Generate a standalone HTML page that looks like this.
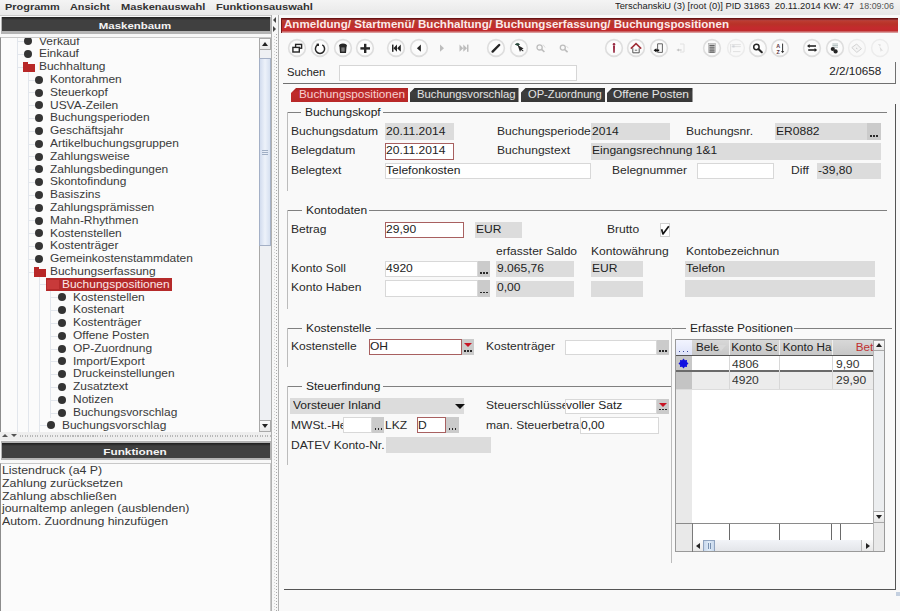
<!DOCTYPE html><html><head><meta charset="utf-8"><style>
html,body{margin:0;padding:0;width:900px;height:611px;overflow:hidden;background:#f0f0f0;font-family:"Liberation Sans",sans-serif;position:relative}
</style></head><body>
<div style="position:absolute;left:0px;top:0px;width:900px;height:16px;background:linear-gradient(#f4f4f4,#e8e8e8);border-bottom:1px solid #cacaca;box-sizing:border-box"></div>
<div style="position:absolute;left:4.9px;top:1.69px;font-size:9.70px;line-height:9.70px;white-space:nowrap;color:#333;font-weight:bold;transform:scaleX(1.1275);transform-origin:left 0;">Programm</div>
<div style="position:absolute;left:70.2px;top:1.69px;font-size:9.70px;line-height:9.70px;white-space:nowrap;color:#333;font-weight:bold;transform:scaleX(1.1245);transform-origin:left 0;">Ansicht</div>
<div style="position:absolute;left:121px;top:1.69px;font-size:9.70px;line-height:9.70px;white-space:nowrap;color:#333;font-weight:bold;transform:scaleX(1.1427);transform-origin:left 0;">Maskenauswahl</div>
<div style="position:absolute;left:216.4px;top:1.69px;font-size:9.70px;line-height:9.70px;white-space:nowrap;color:#333;font-weight:bold;transform:scaleX(1.1463);transform-origin:left 0;">Funktionsauswahl</div>
<div style="position:absolute;left:614.5px;top:2.37px;font-size:8.90px;line-height:8.90px;white-space:nowrap;color:#222;transform:scaleX(1.0517);transform-origin:left 0;">TerschanskiU (3) [root (0)] PID 31863 &nbsp;20.11.2014 KW: 47</div>
<div style="position:absolute;left:859.3px;top:2.37px;font-size:8.90px;line-height:8.90px;white-space:nowrap;color:#555;">18:09:06</div>
<div style="position:absolute;left:0px;top:16px;width:271px;height:595px;background:#f8f8f8"></div>
<div style="position:absolute;left:1px;top:17px;width:270px;height:16.5px;background:#b4b4b4"></div>
<div style="position:absolute;left:2px;top:17.3px;width:268px;height:14px;background:linear-gradient(#1e1e1e,#2e2e2e 1.5px,#404040 3px,#404040)"></div>
<div style="position:absolute;left:-164.75px;width:600px;text-align:center;top:21.17px;font-size:9.60px;line-height:9.60px;white-space:nowrap;color:#f4f4f4;font-weight:bold;transform:scaleX(1.1920);transform-origin:center 0;">Maskenbaum</div>
<div style="position:absolute;left:0px;top:37px;width:271px;height:395px;background:#fbfbfb;border-left:1px solid #8c8c8c;border-top:1px solid #c8c8c8;box-sizing:border-box;overflow:hidden"></div>
<div style="position:absolute;left:0;top:38px;width:259px;height:394px;overflow:hidden">
<div style="position:absolute;left:16.5px;top:0px;width:1px;height:394px;background:#e2e6ec"></div>
<div style="position:absolute;left:27.5px;top:34px;width:1px;height:360px;background:#e2e6ec"></div>
<div style="position:absolute;left:38.5px;top:239px;width:1px;height:155px;background:#e2e6ec"></div>
<div style="position:absolute;left:49.5px;top:252px;width:1px;height:128px;background:#e2e6ec"></div>
<div style="position:absolute;left:16.5px;top:3px;width:7.5px;height:1px;background:#e2e6ec"></div>
<div style="position:absolute;left:24.00px;top:-0.70px;width:8px;height:8px;border-radius:50%;background:#343434"></div>
<div style="position:absolute;left:39.0px;top:-2.46px;font-size:10.82px;line-height:10.82px;white-space:nowrap;color:#3a3a3a;transform:scaleX(1.1050);transform-origin:left 0;">Verkauf</div>
<div style="position:absolute;left:16.5px;top:16px;width:7.5px;height:1px;background:#e2e6ec"></div>
<div style="position:absolute;left:24.00px;top:12.10px;width:8px;height:8px;border-radius:50%;background:#343434"></div>
<div style="position:absolute;left:39.0px;top:10.34px;font-size:10.82px;line-height:10.82px;white-space:nowrap;color:#3a3a3a;transform:scaleX(1.1050);transform-origin:left 0;">Einkauf</div>
<div style="position:absolute;left:16.5px;top:29px;width:7.5px;height:1px;background:#e2e6ec"></div>
<div style="position:absolute;left:23.00px;top:24.40px;width:12px;height:9px;"><div style="position:absolute;left:0;top:0;width:5px;height:2px;background:#b82828"></div><div style="position:absolute;left:0;top:1.5px;width:12px;height:8px;background:#b82828"></div></div>
<div style="position:absolute;left:39.0px;top:23.14px;font-size:10.82px;line-height:10.82px;white-space:nowrap;color:#3a3a3a;transform:scaleX(1.1050);transform-origin:left 0;">Buchhaltung</div>
<div style="position:absolute;left:27.85px;top:42px;width:7.5px;height:1px;background:#e2e6ec"></div>
<div style="position:absolute;left:35.35px;top:37.70px;width:8px;height:8px;border-radius:50%;background:#343434"></div>
<div style="position:absolute;left:50.35px;top:35.94px;font-size:10.82px;line-height:10.82px;white-space:nowrap;color:#3a3a3a;transform:scaleX(1.1050);transform-origin:left 0;">Kontorahmen</div>
<div style="position:absolute;left:27.85px;top:54px;width:7.5px;height:1px;background:#e2e6ec"></div>
<div style="position:absolute;left:35.35px;top:50.50px;width:8px;height:8px;border-radius:50%;background:#343434"></div>
<div style="position:absolute;left:50.35px;top:48.74px;font-size:10.82px;line-height:10.82px;white-space:nowrap;color:#3a3a3a;transform:scaleX(1.1050);transform-origin:left 0;">Steuerkopf</div>
<div style="position:absolute;left:27.85px;top:67px;width:7.5px;height:1px;background:#e2e6ec"></div>
<div style="position:absolute;left:35.35px;top:63.30px;width:8px;height:8px;border-radius:50%;background:#343434"></div>
<div style="position:absolute;left:50.35px;top:61.54px;font-size:10.82px;line-height:10.82px;white-space:nowrap;color:#3a3a3a;transform:scaleX(1.1050);transform-origin:left 0;">USVA-Zeilen</div>
<div style="position:absolute;left:27.85px;top:80px;width:7.5px;height:1px;background:#e2e6ec"></div>
<div style="position:absolute;left:35.35px;top:76.10px;width:8px;height:8px;border-radius:50%;background:#343434"></div>
<div style="position:absolute;left:50.35px;top:74.34px;font-size:10.82px;line-height:10.82px;white-space:nowrap;color:#3a3a3a;transform:scaleX(1.1050);transform-origin:left 0;">Buchungsperioden</div>
<div style="position:absolute;left:27.85px;top:93px;width:7.5px;height:1px;background:#e2e6ec"></div>
<div style="position:absolute;left:35.35px;top:88.90px;width:8px;height:8px;border-radius:50%;background:#343434"></div>
<div style="position:absolute;left:50.35px;top:87.14px;font-size:10.82px;line-height:10.82px;white-space:nowrap;color:#3a3a3a;transform:scaleX(1.1050);transform-origin:left 0;">Gesch&auml;ftsjahr</div>
<div style="position:absolute;left:27.85px;top:106px;width:7.5px;height:1px;background:#e2e6ec"></div>
<div style="position:absolute;left:35.35px;top:101.70px;width:8px;height:8px;border-radius:50%;background:#343434"></div>
<div style="position:absolute;left:50.35px;top:99.94px;font-size:10.82px;line-height:10.82px;white-space:nowrap;color:#3a3a3a;transform:scaleX(1.1050);transform-origin:left 0;">Artikelbuchungsgruppen</div>
<div style="position:absolute;left:27.85px;top:118px;width:7.5px;height:1px;background:#e2e6ec"></div>
<div style="position:absolute;left:35.35px;top:114.50px;width:8px;height:8px;border-radius:50%;background:#343434"></div>
<div style="position:absolute;left:50.35px;top:112.74px;font-size:10.82px;line-height:10.82px;white-space:nowrap;color:#3a3a3a;transform:scaleX(1.1050);transform-origin:left 0;">Zahlungsweise</div>
<div style="position:absolute;left:27.85px;top:131px;width:7.5px;height:1px;background:#e2e6ec"></div>
<div style="position:absolute;left:35.35px;top:127.30px;width:8px;height:8px;border-radius:50%;background:#343434"></div>
<div style="position:absolute;left:50.35px;top:125.54px;font-size:10.82px;line-height:10.82px;white-space:nowrap;color:#3a3a3a;transform:scaleX(1.1050);transform-origin:left 0;">Zahlungsbedingungen</div>
<div style="position:absolute;left:27.85px;top:144px;width:7.5px;height:1px;background:#e2e6ec"></div>
<div style="position:absolute;left:35.35px;top:140.10px;width:8px;height:8px;border-radius:50%;background:#343434"></div>
<div style="position:absolute;left:50.35px;top:138.34px;font-size:10.82px;line-height:10.82px;white-space:nowrap;color:#3a3a3a;transform:scaleX(1.1050);transform-origin:left 0;">Skontofindung</div>
<div style="position:absolute;left:27.85px;top:157px;width:7.5px;height:1px;background:#e2e6ec"></div>
<div style="position:absolute;left:35.35px;top:152.90px;width:8px;height:8px;border-radius:50%;background:#343434"></div>
<div style="position:absolute;left:50.35px;top:151.14px;font-size:10.82px;line-height:10.82px;white-space:nowrap;color:#3a3a3a;transform:scaleX(1.1050);transform-origin:left 0;">Basiszins</div>
<div style="position:absolute;left:27.85px;top:170px;width:7.5px;height:1px;background:#e2e6ec"></div>
<div style="position:absolute;left:35.35px;top:165.70px;width:8px;height:8px;border-radius:50%;background:#343434"></div>
<div style="position:absolute;left:50.35px;top:163.94px;font-size:10.82px;line-height:10.82px;white-space:nowrap;color:#3a3a3a;transform:scaleX(1.1050);transform-origin:left 0;">Zahlungspr&auml;missen</div>
<div style="position:absolute;left:27.85px;top:182px;width:7.5px;height:1px;background:#e2e6ec"></div>
<div style="position:absolute;left:35.35px;top:178.50px;width:8px;height:8px;border-radius:50%;background:#343434"></div>
<div style="position:absolute;left:50.35px;top:176.74px;font-size:10.82px;line-height:10.82px;white-space:nowrap;color:#3a3a3a;transform:scaleX(1.1050);transform-origin:left 0;">Mahn-Rhythmen</div>
<div style="position:absolute;left:27.85px;top:195px;width:7.5px;height:1px;background:#e2e6ec"></div>
<div style="position:absolute;left:35.35px;top:191.30px;width:8px;height:8px;border-radius:50%;background:#343434"></div>
<div style="position:absolute;left:50.35px;top:189.54px;font-size:10.82px;line-height:10.82px;white-space:nowrap;color:#3a3a3a;transform:scaleX(1.1050);transform-origin:left 0;">Kostenstellen</div>
<div style="position:absolute;left:27.85px;top:208px;width:7.5px;height:1px;background:#e2e6ec"></div>
<div style="position:absolute;left:35.35px;top:204.10px;width:8px;height:8px;border-radius:50%;background:#343434"></div>
<div style="position:absolute;left:50.35px;top:202.34px;font-size:10.82px;line-height:10.82px;white-space:nowrap;color:#3a3a3a;transform:scaleX(1.1050);transform-origin:left 0;">Kostentr&auml;ger</div>
<div style="position:absolute;left:27.85px;top:221px;width:7.5px;height:1px;background:#e2e6ec"></div>
<div style="position:absolute;left:35.35px;top:216.90px;width:8px;height:8px;border-radius:50%;background:#343434"></div>
<div style="position:absolute;left:50.35px;top:215.14px;font-size:10.82px;line-height:10.82px;white-space:nowrap;color:#3a3a3a;transform:scaleX(1.1050);transform-origin:left 0;">Gemeinkostenstammdaten</div>
<div style="position:absolute;left:27.85px;top:234px;width:7.5px;height:1px;background:#e2e6ec"></div>
<div style="position:absolute;left:34.35px;top:229.20px;width:12px;height:9px;"><div style="position:absolute;left:0;top:0;width:5px;height:2px;background:#b82828"></div><div style="position:absolute;left:0;top:1.5px;width:12px;height:8px;background:#b82828"></div></div>
<div style="position:absolute;left:50.35px;top:227.94px;font-size:10.82px;line-height:10.82px;white-space:nowrap;color:#3a3a3a;transform:scaleX(1.1050);transform-origin:left 0;">Buchungserfassung</div>
<div style="position:absolute;left:39.2px;top:246px;width:7.5px;height:1px;background:#e2e6ec"></div>
<div style="position:absolute;left:46.2px;top:240.3px;width:126px;height:12.3px;background:#b52a2a"></div>
<div style="position:absolute;left:46.70px;top:242.00px;width:12px;height:9px;background:#c83a3a"></div>
<div style="position:absolute;left:61.7px;top:240.74px;font-size:10.82px;line-height:10.82px;white-space:nowrap;color:#fbe6e6;transform:scaleX(1.1050);transform-origin:left 0;">Buchungspositionen</div>
<div style="position:absolute;left:50.55px;top:259px;width:7.5px;height:1px;background:#e2e6ec"></div>
<div style="position:absolute;left:58.05px;top:255.30px;width:8px;height:8px;border-radius:50%;background:#343434"></div>
<div style="position:absolute;left:73.05px;top:253.54px;font-size:10.82px;line-height:10.82px;white-space:nowrap;color:#3a3a3a;transform:scaleX(1.1050);transform-origin:left 0;">Kostenstellen</div>
<div style="position:absolute;left:50.55px;top:272px;width:7.5px;height:1px;background:#e2e6ec"></div>
<div style="position:absolute;left:58.05px;top:268.10px;width:8px;height:8px;border-radius:50%;background:#343434"></div>
<div style="position:absolute;left:73.05px;top:266.34px;font-size:10.82px;line-height:10.82px;white-space:nowrap;color:#3a3a3a;transform:scaleX(1.1050);transform-origin:left 0;">Kostenart</div>
<div style="position:absolute;left:50.55px;top:285px;width:7.5px;height:1px;background:#e2e6ec"></div>
<div style="position:absolute;left:58.05px;top:280.90px;width:8px;height:8px;border-radius:50%;background:#343434"></div>
<div style="position:absolute;left:73.05px;top:279.14px;font-size:10.82px;line-height:10.82px;white-space:nowrap;color:#3a3a3a;transform:scaleX(1.1050);transform-origin:left 0;">Kostentr&auml;ger</div>
<div style="position:absolute;left:50.55px;top:298px;width:7.5px;height:1px;background:#e2e6ec"></div>
<div style="position:absolute;left:58.05px;top:293.70px;width:8px;height:8px;border-radius:50%;background:#343434"></div>
<div style="position:absolute;left:73.05px;top:291.94px;font-size:10.82px;line-height:10.82px;white-space:nowrap;color:#3a3a3a;transform:scaleX(1.1050);transform-origin:left 0;">Offene Posten</div>
<div style="position:absolute;left:50.55px;top:311px;width:7.5px;height:1px;background:#e2e6ec"></div>
<div style="position:absolute;left:58.05px;top:306.50px;width:8px;height:8px;border-radius:50%;background:#343434"></div>
<div style="position:absolute;left:73.05px;top:304.74px;font-size:10.82px;line-height:10.82px;white-space:nowrap;color:#3a3a3a;transform:scaleX(1.1050);transform-origin:left 0;">OP-Zuordnung</div>
<div style="position:absolute;left:50.55px;top:323px;width:7.5px;height:1px;background:#e2e6ec"></div>
<div style="position:absolute;left:58.05px;top:319.30px;width:8px;height:8px;border-radius:50%;background:#343434"></div>
<div style="position:absolute;left:73.05px;top:317.54px;font-size:10.82px;line-height:10.82px;white-space:nowrap;color:#3a3a3a;transform:scaleX(1.1050);transform-origin:left 0;">Import/Export</div>
<div style="position:absolute;left:50.55px;top:336px;width:7.5px;height:1px;background:#e2e6ec"></div>
<div style="position:absolute;left:58.05px;top:332.10px;width:8px;height:8px;border-radius:50%;background:#343434"></div>
<div style="position:absolute;left:73.05px;top:330.34px;font-size:10.82px;line-height:10.82px;white-space:nowrap;color:#3a3a3a;transform:scaleX(1.1050);transform-origin:left 0;">Druckeinstellungen</div>
<div style="position:absolute;left:50.55px;top:349px;width:7.5px;height:1px;background:#e2e6ec"></div>
<div style="position:absolute;left:58.05px;top:344.90px;width:8px;height:8px;border-radius:50%;background:#343434"></div>
<div style="position:absolute;left:73.05px;top:343.14px;font-size:10.82px;line-height:10.82px;white-space:nowrap;color:#3a3a3a;transform:scaleX(1.1050);transform-origin:left 0;">Zusatztext</div>
<div style="position:absolute;left:50.55px;top:362px;width:7.5px;height:1px;background:#e2e6ec"></div>
<div style="position:absolute;left:58.05px;top:357.70px;width:8px;height:8px;border-radius:50%;background:#343434"></div>
<div style="position:absolute;left:73.05px;top:355.94px;font-size:10.82px;line-height:10.82px;white-space:nowrap;color:#3a3a3a;transform:scaleX(1.1050);transform-origin:left 0;">Notizen</div>
<div style="position:absolute;left:50.55px;top:375px;width:7.5px;height:1px;background:#e2e6ec"></div>
<div style="position:absolute;left:58.05px;top:370.50px;width:8px;height:8px;border-radius:50%;background:#343434"></div>
<div style="position:absolute;left:73.05px;top:368.74px;font-size:10.82px;line-height:10.82px;white-space:nowrap;color:#3a3a3a;transform:scaleX(1.1050);transform-origin:left 0;">Buchungsvorschlag</div>
<div style="position:absolute;left:39.2px;top:387px;width:7.5px;height:1px;background:#e2e6ec"></div>
<div style="position:absolute;left:46.70px;top:383.30px;width:8px;height:8px;border-radius:50%;background:#343434"></div>
<div style="position:absolute;left:61.7px;top:381.54px;font-size:10.82px;line-height:10.82px;white-space:nowrap;color:#3a3a3a;transform:scaleX(1.1050);transform-origin:left 0;">Buchungsvorschlag</div>
</div>
<div style="position:absolute;left:259px;top:38px;width:12px;height:394px;background:#eef0f3;border-left:1px solid #a8a8a8;box-sizing:border-box"></div>
<div style="position:absolute;left:259px;top:38px;width:12px;height:12px;background:linear-gradient(#fafafa,#e8e8e8);border:1px solid #a8a8a8;box-sizing:border-box"></div>
<div style="position:absolute;left:261.5px;top:42px;width:0px;height:0px;border-left:3.5px solid transparent;border-right:3.5px solid transparent;border-bottom:4px solid #222"></div>
<div style="position:absolute;left:259px;top:58px;width:12px;height:188px;background:linear-gradient(90deg,#d2dcee,#edf2fa 50%,#d6e0f0);border:1px solid #a4b0c6;box-sizing:border-box"></div>
<div style="position:absolute;left:262px;top:149.5px;width:6px;height:1px;background:#a0aec4"></div>
<div style="position:absolute;left:262px;top:151.5px;width:6px;height:1px;background:#a0aec4"></div>
<div style="position:absolute;left:262px;top:153.5px;width:6px;height:1px;background:#a0aec4"></div>
<div style="position:absolute;left:259px;top:420px;width:12px;height:12px;background:linear-gradient(#fafafa,#e8e8e8);border:1px solid #a8a8a8;box-sizing:border-box"></div>
<div style="position:absolute;left:261.5px;top:424px;width:0px;height:0px;border-left:3.5px solid transparent;border-right:3.5px solid transparent;border-top:4px solid #222"></div>
<div style="position:absolute;left:0px;top:432px;width:271px;height:8px;background:#eeeeee"></div>
<div style="position:absolute;left:20px;top:435px;width:251px;height:2px;background:repeating-linear-gradient(90deg,#b8b8b8 0 1px,transparent 1px 2.5px)"></div>
<div style="position:absolute;left:2px;top:434px;width:0px;height:0px;border-left:3px solid transparent;border-right:3px solid transparent;border-bottom:3.5px solid #555"></div>
<div style="position:absolute;left:11px;top:434px;width:0px;height:0px;border-left:3px solid transparent;border-right:3px solid transparent;border-top:3.5px solid #555"></div>
<div style="position:absolute;left:1px;top:441px;width:270px;height:19px;background:#b4b4b4"></div>
<div style="position:absolute;left:2px;top:443px;width:268px;height:14.7px;background:linear-gradient(#1e1e1e,#2e2e2e 1.5px,#404040 3px,#404040)"></div>
<div style="position:absolute;left:-164.6px;width:600px;text-align:center;top:447.07px;font-size:9.60px;line-height:9.60px;white-space:nowrap;color:#f4f4f4;font-weight:bold;transform:scaleX(1.2276);transform-origin:center 0;">Funktionen</div>
<div style="position:absolute;left:0px;top:463px;width:271px;height:148px;background:#fbfbfb;border-left:1px solid #8c8c8c;border-top:1px solid #c8c8c8;border-right:1px solid #c8c8c8;box-sizing:border-box"></div>
<div style="position:absolute;left:2px;top:465.06px;font-size:10.56px;line-height:10.56px;white-space:nowrap;color:#383838;transform:scaleX(1.1705);transform-origin:left 0;">Listendruck (a4 P)</div>
<div style="position:absolute;left:2px;top:477.81px;font-size:10.56px;line-height:10.56px;white-space:nowrap;color:#383838;transform:scaleX(1.1705);transform-origin:left 0;">Zahlung zur&uuml;cksetzen</div>
<div style="position:absolute;left:2px;top:490.56px;font-size:10.56px;line-height:10.56px;white-space:nowrap;color:#383838;transform:scaleX(1.1705);transform-origin:left 0;">Zahlung abschlie&szlig;en</div>
<div style="position:absolute;left:2px;top:503.31px;font-size:10.56px;line-height:10.56px;white-space:nowrap;color:#383838;transform:scaleX(1.1705);transform-origin:left 0;">journaltemp anlegen (ausblenden)</div>
<div style="position:absolute;left:2px;top:516.06px;font-size:10.56px;line-height:10.56px;white-space:nowrap;color:#383838;transform:scaleX(1.1705);transform-origin:left 0;">Autom. Zuordnung hinzuf&uuml;gen</div>
<div style="position:absolute;left:271px;top:15px;width:7px;height:596px;background:#eeeeee;border-left:1px solid #c4c4c4;box-sizing:border-box"></div>
<div style="position:absolute;left:271px;top:15px;width:7px;height:596px;background:#f7f7f7;border-left:1px solid #b0b0b0;box-sizing:border-box"></div>
<div style="position:absolute;left:276px;top:34px;width:1.2px;height:577px;background:repeating-linear-gradient(#a8a8a8 0 1.2px,transparent 1.2px 3px)"></div>
<div style="position:absolute;left:273.5px;top:35.5px;width:1px;height:577px;background:repeating-linear-gradient(#d4d4d4 0 1px,transparent 1px 3px)"></div>
<div style="position:absolute;left:273px;top:17px;width:0px;height:0px;border-top:3px solid transparent;border-bottom:3px solid transparent;border-right:3.5px solid #444"></div>
<div style="position:absolute;left:273px;top:25.5px;width:0px;height:0px;border-top:3px solid transparent;border-bottom:3px solid transparent;border-left:3.5px solid #444"></div>
<div style="position:absolute;left:278px;top:15px;width:622px;height:596px;background:#f9f9f9"></div>
<div style="position:absolute;left:278px;top:15px;width:1px;height:596px;background:#b0b0b0"></div>
<div style="position:absolute;left:895px;top:104px;width:1px;height:485.5px;background:#555"></div>
<div style="position:absolute;left:284px;top:588.6px;width:612px;height:1px;background:#555"></div>
<div style="position:absolute;left:896px;top:592px;width:4px;height:3.5px;background:#c4d0e0"></div>
<div style="position:absolute;left:281px;top:17.8px;width:617px;height:15.2px;background:linear-gradient(#6a1414 0,#6a1414 1.2px,#b04040 1.8px,#bc3a30 3.5px,#b83228 6px,#c42a2e 10px,#c02a2c 13.2px,#d89a9a 13.8px,#d89a9a 15.2px);border-left:1px solid #7a1a1a;box-sizing:border-box"></div>
<div style="position:absolute;left:283.9px;top:20.43px;font-size:10.00px;line-height:10.00px;white-space:nowrap;color:#fbeaea;font-weight:bold;transform:scaleX(1.1591);transform-origin:left 0;">Anmeldung/ Startmen&uuml;/ Buchhaltung/ Buchungserfassung/ Buchungspositionen</div>
<svg width="0" height="0" style="position:absolute"><defs><radialGradient id="rg" cx="50%" cy="45%" r="55%"><stop offset="0" stop-color="#ffffff"/><stop offset="0.85" stop-color="#fafafa"/><stop offset="1" stop-color="#eaeaea"/></radialGradient></defs></svg>
<svg style="position:absolute;left:286.70px;top:37.70px" width="20" height="20" viewBox="0 0 20 20"><circle cx="10" cy="10" r="8.4" fill="url(#rg)" stroke="#dedede" stroke-width="1.6"/><g transform="translate(1 1)"><rect x="7.6" y="5.4" width="6" height="3.8" fill="none" stroke="#262626" stroke-width="1.4"/><rect x="4.9" y="8.4" width="6.4" height="4.6" fill="#fafafa" stroke="#262626" stroke-width="1.4"/></g></svg>
<svg style="position:absolute;left:309.70px;top:37.70px" width="20" height="20" viewBox="0 0 20 20"><circle cx="10" cy="10" r="8.4" fill="url(#rg)" stroke="#dedede" stroke-width="1.6"/><g transform="translate(1 1)"><path d="M6.7 5.9 A4.6 4.6 0 1 0 11.3 5.9" fill="none" stroke="#262626" stroke-width="1.5"/><rect x="5.6" y="4.6" width="2.4" height="2.4" fill="#262626"/></g></svg>
<svg style="position:absolute;left:332.50px;top:37.70px" width="20" height="20" viewBox="0 0 20 20"><circle cx="10" cy="10" r="8.4" fill="url(#rg)" stroke="#dedede" stroke-width="1.6"/><g transform="translate(1 1)"><path d="M4.9 7.2 Q5 4.6 9 4.4 Q13 4.6 13.1 7.2 Z" fill="#262626"/><path d="M5.4 7 H12.6 L12 13.9 H6 Z" fill="#262626"/><path d="M8.1 8.4 V12.6 M9.9 8.4 V12.6" stroke="#eaeaea" stroke-width="0.7"/></g></svg>
<svg style="position:absolute;left:354.70px;top:37.70px" width="20" height="20" viewBox="0 0 20 20"><circle cx="10" cy="10" r="8.4" fill="url(#rg)" stroke="#dedede" stroke-width="1.6"/><g transform="translate(1 1)"><rect x="4.4" y="8.2" width="9.6" height="2.4" fill="#262626"/><rect x="8" y="4.8" width="2.4" height="9.2" fill="#262626"/></g></svg>
<svg style="position:absolute;left:386.20px;top:37.70px" width="20" height="20" viewBox="0 0 20 20"><circle cx="10" cy="10" r="8.4" fill="url(#rg)" stroke="#dedede" stroke-width="1.6"/><g transform="translate(1 1)"><rect x="5" y="5.6" width="1.5" height="7.2" fill="#262626"/><path d="M10 5.6 L6.4 9.2 L10 12.8 Z M13.8 5.6 L10.2 9.2 L13.8 12.8 Z" fill="#262626"/></g></svg>
<svg style="position:absolute;left:409.20px;top:37.70px" width="20" height="20" viewBox="0 0 20 20"><circle cx="10" cy="10" r="8.4" fill="url(#rg)" stroke="#dedede" stroke-width="1.6"/><g transform="translate(1 1)"><path d="M10.9 5.6 L6.9 9.2 L10.9 12.8 Z" fill="#262626"/></g></svg>
<svg style="position:absolute;left:432.00px;top:37.70px" width="20" height="20" viewBox="0 0 20 20"><g transform="translate(1 1)"><path d="M7 5.6 L11 9.2 L7 12.8 Z" fill="#bdbdbd"/></g></svg>
<svg style="position:absolute;left:454.30px;top:37.70px" width="20" height="20" viewBox="0 0 20 20"><g transform="translate(1 1)"><path d="M4.5 5.6 L8.2 9.2 L4.5 12.8 Z M8.3 5.6 L12 9.2 L8.3 12.8 Z" fill="#bdbdbd"/><rect x="12" y="5.6" width="1.5" height="7.2" fill="#bdbdbd"/></g></svg>
<svg style="position:absolute;left:486.00px;top:37.70px" width="20" height="20" viewBox="0 0 20 20"><circle cx="10" cy="10" r="8.4" fill="url(#rg)" stroke="#dedede" stroke-width="1.6"/><g transform="translate(1 1)"><path d="M5.6 12.6 L12.2 6" stroke="#262626" stroke-width="2.4" stroke-linecap="round"/></g></svg>
<svg style="position:absolute;left:509.30px;top:37.70px" width="20" height="20" viewBox="0 0 20 20"><circle cx="10" cy="10" r="8.4" fill="url(#rg)" stroke="#dedede" stroke-width="1.6"/><g transform="translate(1 1)"><path d="M5.4 5.4 Q7.4 3.6 9.4 5.2 L8.4 6.6 Z" fill="#27483a" stroke="#27483a" stroke-width="1"/><path d="M7.6 6 L10 13 L11 11 L13 12.6 L13.6 11.8 L11.8 10.2 L13.6 9.4 Z" fill="#262626"/></g></svg>
<svg style="position:absolute;left:531.00px;top:37.70px" width="20" height="20" viewBox="0 0 20 20"><g transform="translate(1 1)"><circle cx="7.6" cy="8.4" r="2.6" fill="none" stroke="#bdbdbd" stroke-width="1.3"/><path d="M9.6 10.4 L12.4 13" stroke="#bdbdbd" stroke-width="1.6"/><path d="M11 5.6 L13.2 8.6" stroke="#d4d4d4" stroke-width="0.8"/></g></svg>
<svg style="position:absolute;left:554.00px;top:37.70px" width="20" height="20" viewBox="0 0 20 20"><g transform="translate(1 1)"><circle cx="7.8" cy="8.6" r="2.5" fill="none" stroke="#bdbdbd" stroke-width="1.3"/><path d="M9.8 10.6 L12.6 13.2" stroke="#bdbdbd" stroke-width="1.6"/><path d="M11.4 7 L13.4 9.2" stroke="#d4d4d4" stroke-width="0.8"/></g></svg>
<svg style="position:absolute;left:603.50px;top:37.70px" width="20" height="20" viewBox="0 0 20 20"><circle cx="10" cy="10" r="8.4" fill="url(#rg)" stroke="#dedede" stroke-width="1.6"/><g transform="translate(1 1)"><circle cx="9" cy="5.4" r="1.3" fill="#9a2c44"/><path d="M8 7 H10 L9.8 13.8 H8.2 Z" fill="#9a2c44"/></g></svg>
<svg style="position:absolute;left:625.80px;top:37.70px" width="20" height="20" viewBox="0 0 20 20"><circle cx="10" cy="10" r="8.4" fill="url(#rg)" stroke="#dedede" stroke-width="1.6"/><g transform="translate(1 1)"><path d="M3.8 9.6 L9 4.6 L14.2 9.6" fill="none" stroke="#a03038" stroke-width="1.5"/><path d="M5.8 9.2 V13.8 H12.2 V9.2" fill="#fafafa" stroke="#555" stroke-width="1"/><rect x="7.8" y="10.6" width="2.4" height="1.4" fill="#999"/></g></svg>
<svg style="position:absolute;left:648.50px;top:37.70px" width="20" height="20" viewBox="0 0 20 20"><circle cx="10" cy="10" r="8.4" fill="url(#rg)" stroke="#dedede" stroke-width="1.6"/><g transform="translate(1 1)"><path d="M7.6 4.8 H12.4 V13.4 H7.6 Z" fill="#fafafa" stroke="#666" stroke-width="1"/><path d="M3.6 11.3 L6.4 9.2 V10.4 H9.2 V12.2 H6.4 V13.4 Z" fill="#111"/></g></svg>
<svg style="position:absolute;left:670.50px;top:37.70px" width="20" height="20" viewBox="0 0 20 20"><g transform="translate(1 1)"><path d="M8 5 H12 V13 H8" fill="none" stroke="#e2e2e2" stroke-width="1"/><path d="M4.4 11 L7 9.6 V12.4 Z M6.8 10.6 H9.6 V11.6 H6.8 Z" fill="#c4c4c4"/></g></svg>
<svg style="position:absolute;left:701.50px;top:37.70px" width="20" height="20" viewBox="0 0 20 20"><circle cx="10" cy="10" r="8.4" fill="url(#rg)" stroke="#dedede" stroke-width="1.6"/><g transform="translate(1 1)"><rect x="5.6" y="4.6" width="6.8" height="9" fill="#d8d8d8" stroke="#aaa" stroke-width="0.6"/><path d="M6.4 6.4 H11.6 M6.4 8.2 H11.6 M6.4 10 H11.6 M6.4 11.8 H11.6 M6.4 13.2 H11.6" stroke="#4a4a4a" stroke-width="0.9"/></g></svg>
<svg style="position:absolute;left:725.50px;top:37.70px" width="20" height="20" viewBox="0 0 20 20"><circle cx="10" cy="10" r="8.4" fill="none" stroke="#ececec" stroke-width="1.5"/><g transform="translate(1 1)"><path d="M3.6 5 V13.6 M4.6 5.6 H13.8 M4.6 7.6 H13.8 M6 12.6 H13.4" stroke="#e0e0e0" stroke-width="1"/><rect x="5.4" y="6.4" width="2.2" height="2" fill="#cfd2d8"/></g></svg>
<svg style="position:absolute;left:747.80px;top:37.70px" width="20" height="20" viewBox="0 0 20 20"><circle cx="10" cy="10" r="8.4" fill="url(#rg)" stroke="#dedede" stroke-width="1.6"/><g transform="translate(1 1)"><circle cx="7.4" cy="8" r="2.7" fill="none" stroke="#262626" stroke-width="1.5"/><path d="M9.4 10 L12.8 13.2" stroke="#262626" stroke-width="2.1" stroke-linecap="round"/></g></svg>
<svg style="position:absolute;left:770.00px;top:37.70px" width="20" height="20" viewBox="0 0 20 20"><circle cx="10" cy="10" r="8.4" fill="url(#rg)" stroke="#dedede" stroke-width="1.6"/><g transform="translate(1 1)"><text x="5.3" y="9" font-size="5.4" font-family="Liberation Sans" font-weight="bold" fill="#5a3440">A</text><text x="5.5" y="14.6" font-size="5.4" font-family="Liberation Sans" font-weight="bold" fill="#5a3440">Z</text><path d="M11.6 4.6 V12.6" stroke="#333" stroke-width="1"/><path d="M10 12 L11.6 14.2 L13.2 12 Z" fill="#333"/></g></svg>
<svg style="position:absolute;left:802.00px;top:37.70px" width="20" height="20" viewBox="0 0 20 20"><circle cx="10" cy="10" r="8.4" fill="url(#rg)" stroke="#dedede" stroke-width="1.6"/><g transform="translate(1 1)"><path d="M5.4 7 H13" stroke="#262626" stroke-width="1.6"/><path d="M6.6 5 L4 7 L6.6 9 Z" fill="#262626"/><path d="M5.2 11 H12.8" stroke="#262626" stroke-width="1.6"/><path d="M11.6 9 L14.2 11 L11.6 13 Z" fill="#262626"/></g></svg>
<svg style="position:absolute;left:825.00px;top:37.70px" width="20" height="20" viewBox="0 0 20 20"><circle cx="10" cy="10" r="8.4" fill="url(#rg)" stroke="#dedede" stroke-width="1.6"/><g transform="translate(1 1)"><path d="M6.4 5 H12 M6.4 6.6 H12 M6.4 8.2 H12" stroke="#9aa" stroke-width="0.8"/><circle cx="6.8" cy="10" r="2.1" fill="#262626"/><circle cx="9.6" cy="12.4" r="2.1" fill="#262626"/></g></svg>
<svg style="position:absolute;left:847.20px;top:37.70px" width="20" height="20" viewBox="0 0 20 20"><circle cx="10" cy="10" r="8.4" fill="none" stroke="#ececec" stroke-width="1.5"/><g transform="translate(1 1)"><path d="M3.8 8.6 L8.6 5 L13.4 9.8 L8.8 13.4 Z" fill="#f4f4f4" stroke="#d2d2d2" stroke-width="1"/><path d="M8 9 L9.4 9.8" stroke="#c4c4c4" stroke-width="0.9"/></g></svg>
<svg style="position:absolute;left:870.00px;top:37.70px" width="20" height="20" viewBox="0 0 20 20"><circle cx="10" cy="10" r="8.4" fill="none" stroke="#ececec" stroke-width="1.5"/><g transform="translate(1 1)"><path d="M6.8 5 L9.8 5.6 L9.2 7.4 Z M8.4 7.2 L9.8 13 L10.8 11.2 L12.6 12.4 Z" fill="#dcdcdc"/></g></svg>
<div style="position:absolute;left:286.9px;top:67.02px;font-size:11.20px;line-height:11.20px;white-space:nowrap;color:#222;transform:scaleX(1.0082);transform-origin:left 0;">Suchen</div>
<div style="position:absolute;left:339px;top:64.5px;width:238px;height:16px;background:#fff;border:1px solid #d6d6d6;box-sizing:border-box"></div>
<div style="position:absolute;right:19.100000000000023px;top:66.80px;font-size:10.40px;line-height:10.40px;white-space:nowrap;color:#222;transform:scaleX(1.1239);transform-origin:right 0;">2/2/10658</div>
<div style="position:absolute;left:283px;top:83px;width:613px;height:1.2px;background:#707070"></div>
<div style="position:absolute;left:895px;top:62px;width:1.2px;height:22px;background:#707070"></div>
<div style="position:absolute;left:291px;top:87.5px;width:117px;height:14.5px;background:linear-gradient(#a82020,#c02c2c 30%,#b82828);clip-path:polygon(5.5px 0,100% 0,100% 100%,0 100%,0 5.5px)"></div>
<div style="position:absolute;left:299px;top:90.38px;font-size:10.30px;line-height:10.30px;white-space:nowrap;color:#f6d0d0;transform:scaleX(1.1426);transform-origin:left 0;">Buchungspositionen</div>
<div style="position:absolute;left:409.5px;top:87.5px;width:109.0px;height:14.5px;background:linear-gradient(#2c2c2c,#3e3e3e 30%,#383838);clip-path:polygon(5.5px 0,100% 0,100% 100%,0 100%,0 5.5px)"></div>
<div style="position:absolute;left:416.7px;top:90.38px;font-size:10.30px;line-height:10.30px;white-space:nowrap;color:#e4e4e4;transform:scaleX(1.0968);transform-origin:left 0;">Buchungsvorschlag</div>
<div style="position:absolute;left:520.5px;top:87.5px;width:84.5px;height:14.5px;background:linear-gradient(#2c2c2c,#3e3e3e 30%,#383838);clip-path:polygon(5.5px 0,100% 0,100% 100%,0 100%,0 5.5px)"></div>
<div style="position:absolute;left:528px;top:90.38px;font-size:10.30px;line-height:10.30px;white-space:nowrap;color:#e4e4e4;transform:scaleX(1.0832);transform-origin:left 0;">OP-Zuordnung</div>
<div style="position:absolute;left:607px;top:87.5px;width:85.5px;height:14.5px;background:linear-gradient(#2c2c2c,#3e3e3e 30%,#383838);clip-path:polygon(5.5px 0,100% 0,100% 100%,0 100%,0 5.5px)"></div>
<div style="position:absolute;left:613.4px;top:90.38px;font-size:10.30px;line-height:10.30px;white-space:nowrap;color:#e4e4e4;transform:scaleX(1.1574);transform-origin:left 0;">Offene Posten</div>
<div style="position:absolute;left:287px;top:112px;width:14.300000000000011px;height:1px;background:#808080"></div>
<div style="position:absolute;left:382.8px;top:112px;width:504.2px;height:1px;background:#808080"></div>
<div style="position:absolute;left:287px;top:112px;width:1px;height:79px;background:#bcbcbc"></div>
<div style="position:absolute;left:305.3px;top:108.16px;font-size:10.21px;line-height:10.21px;white-space:nowrap;color:#222;transform:scaleX(1.1705);transform-origin:left 0;">Buchungskopf</div>
<div style="position:absolute;left:287px;top:210px;width:14.699999999999989px;height:1px;background:#808080"></div>
<div style="position:absolute;left:369.2px;top:210px;width:517.8px;height:1px;background:#808080"></div>
<div style="position:absolute;left:287px;top:210px;width:1px;height:99px;background:#bcbcbc"></div>
<div style="position:absolute;left:305.7px;top:206.16px;font-size:10.21px;line-height:10.21px;white-space:nowrap;color:#222;transform:scaleX(1.1705);transform-origin:left 0;">Kontodaten</div>
<div style="position:absolute;left:287px;top:328px;width:14.5px;height:1px;background:#808080"></div>
<div style="position:absolute;left:375.5px;top:328px;width:295.5px;height:1px;background:#808080"></div>
<div style="position:absolute;left:287px;top:328px;width:1px;height:39px;background:#bcbcbc"></div>
<div style="position:absolute;left:305.5px;top:324.16px;font-size:10.21px;line-height:10.21px;white-space:nowrap;color:#222;transform:scaleX(1.1705);transform-origin:left 0;">Kostenstelle</div>
<div style="position:absolute;left:287px;top:386px;width:14.5px;height:1px;background:#808080"></div>
<div style="position:absolute;left:382.5px;top:386px;width:288.5px;height:1px;background:#808080"></div>
<div style="position:absolute;left:287px;top:386px;width:1px;height:78.5px;background:#bcbcbc"></div>
<div style="position:absolute;left:305.5px;top:382.16px;font-size:10.21px;line-height:10.21px;white-space:nowrap;color:#222;transform:scaleX(1.1705);transform-origin:left 0;">Steuerfindung</div>
<div style="position:absolute;left:671px;top:328px;width:15.399999999999977px;height:1px;background:#808080"></div>
<div style="position:absolute;left:794.4px;top:328px;width:98.10000000000002px;height:1px;background:#808080"></div>
<div style="position:absolute;left:671px;top:328px;width:1px;height:235px;background:#bcbcbc"></div>
<div style="position:absolute;left:690.4px;top:324.16px;font-size:10.21px;line-height:10.21px;white-space:nowrap;color:#222;transform:scaleX(1.1705);transform-origin:left 0;">Erfasste Positionen</div>
<div style="position:absolute;left:291px;top:126.58px;font-size:10.30px;line-height:10.30px;white-space:nowrap;color:#2a2a2a;transform:scaleX(1.1705);transform-origin:left 0;">Buchungsdatum</div>
<div style="position:absolute;left:291px;top:146.18px;font-size:10.30px;line-height:10.30px;white-space:nowrap;color:#2a2a2a;transform:scaleX(1.1705);transform-origin:left 0;">Belegdatum</div>
<div style="position:absolute;left:291px;top:165.58px;font-size:10.30px;line-height:10.30px;white-space:nowrap;color:#2a2a2a;transform:scaleX(1.1705);transform-origin:left 0;">Belegtext</div>
<div style="position:absolute;left:385px;top:123.3px;width:69px;height:16.700000000000003px;background:#dcdcdc"></div>
<div style="position:absolute;left:386.1px;top:126.58px;font-size:10.30px;line-height:10.30px;white-space:nowrap;color:#222;transform:scaleX(1.1705);transform-origin:left 0;">20.11.2014</div>
<div style="position:absolute;left:385px;top:143px;width:69px;height:17px;background:#fff;border:1px solid #a86060;box-sizing:border-box"></div>
<div style="position:absolute;left:386.1px;top:146.18px;font-size:10.30px;line-height:10.30px;white-space:nowrap;color:#222;transform:scaleX(1.1705);transform-origin:left 0;">20.11.2014</div>
<div style="position:absolute;left:385px;top:162.5px;width:206px;height:16.69999999999999px;background:#fff;border:1px solid #d8d8d8;box-sizing:border-box"></div>
<div style="position:absolute;left:386.1px;top:165.58px;font-size:10.30px;line-height:10.30px;white-space:nowrap;color:#222;transform:scaleX(1.1705);transform-origin:left 0;">Telefonkosten</div>
<div style="position:absolute;left:496.7px;top:123.58px;width:94.3px;height:16.30px;overflow:hidden"><div style="position:absolute;left:0;top:3px;font-size:10.30px;line-height:10.30px;white-space:nowrap;color:#2a2a2a;transform:scaleX(1.1705);transform-origin:0 0">Buchungsperiode</div></div>
<div style="position:absolute;left:496.7px;top:146.18px;font-size:10.30px;line-height:10.30px;white-space:nowrap;color:#2a2a2a;transform:scaleX(1.1705);transform-origin:left 0;">Buchungstext</div>
<div style="position:absolute;left:591px;top:123.3px;width:79px;height:16.700000000000003px;background:#dcdcdc"></div>
<div style="position:absolute;left:592.1px;top:126.58px;font-size:10.30px;line-height:10.30px;white-space:nowrap;color:#222;transform:scaleX(1.1705);transform-origin:left 0;">2014</div>
<div style="position:absolute;left:591px;top:143px;width:289.5px;height:17px;background:#dcdcdc"></div>
<div style="position:absolute;left:592.1px;top:146.18px;font-size:10.30px;line-height:10.30px;white-space:nowrap;color:#222;transform:scaleX(1.1705);transform-origin:left 0;">Eingangsrechnung 1&amp;1</div>
<div style="position:absolute;left:686px;top:126.58px;font-size:10.30px;line-height:10.30px;white-space:nowrap;color:#2a2a2a;transform:scaleX(1.1705);transform-origin:left 0;">Buchungsnr.</div>
<div style="position:absolute;left:775px;top:123.3px;width:105.5px;height:16.700000000000003px;background:#dcdcdc"></div>
<div style="position:absolute;left:776.1px;top:126.58px;font-size:10.30px;line-height:10.30px;white-space:nowrap;color:#222;transform:scaleX(1.1705);transform-origin:left 0;">ER0882</div>
<div style="position:absolute;left:867px;top:123.3px;width:13.5px;height:16.700000000000003px;background:#cbcbcb"></div>
<div style="position:absolute;left:869.95px;top:135px;width:1.6px;height:1.6px;background:#2a2a2a"></div>
<div style="position:absolute;left:872.95px;top:135px;width:1.6px;height:1.6px;background:#2a2a2a"></div>
<div style="position:absolute;left:875.95px;top:135px;width:1.6px;height:1.6px;background:#2a2a2a"></div>
<div style="position:absolute;left:612.2px;top:165.58px;font-size:10.30px;line-height:10.30px;white-space:nowrap;color:#2a2a2a;transform:scaleX(1.1705);transform-origin:left 0;">Belegnummer</div>
<div style="position:absolute;left:697px;top:162.5px;width:77px;height:16.69999999999999px;background:#fff;border:1px solid #d8d8d8;box-sizing:border-box"></div>
<div style="position:absolute;left:791px;top:165.58px;font-size:10.30px;line-height:10.30px;white-space:nowrap;color:#2a2a2a;transform:scaleX(1.1705);transform-origin:left 0;">Diff</div>
<div style="position:absolute;left:817px;top:162.5px;width:63.5px;height:16.69999999999999px;background:#dcdcdc"></div>
<div style="position:absolute;left:818.1px;top:165.58px;font-size:10.30px;line-height:10.30px;white-space:nowrap;color:#222;transform:scaleX(1.1705);transform-origin:left 0;">-39,80</div>
<div style="position:absolute;left:291px;top:225.18px;font-size:10.30px;line-height:10.30px;white-space:nowrap;color:#2a2a2a;transform:scaleX(1.1705);transform-origin:left 0;">Betrag</div>
<div style="position:absolute;left:385px;top:221.6px;width:79px;height:16.400000000000006px;background:#fff;border:1px solid #a86060;box-sizing:border-box"></div>
<div style="position:absolute;left:386.1px;top:225.18px;font-size:10.30px;line-height:10.30px;white-space:nowrap;color:#222;transform:scaleX(1.1705);transform-origin:left 0;">29,90</div>
<div style="position:absolute;left:475px;top:221.6px;width:47px;height:16.400000000000006px;background:#dcdcdc"></div>
<div style="position:absolute;left:476.1px;top:225.18px;font-size:10.30px;line-height:10.30px;white-space:nowrap;color:#222;transform:scaleX(1.1705);transform-origin:left 0;">EUR</div>
<div style="position:absolute;left:607.3px;top:224.88px;font-size:10.30px;line-height:10.30px;white-space:nowrap;color:#2a2a2a;transform:scaleX(1.1705);transform-origin:left 0;">Brutto</div>
<div style="position:absolute;left:660.4px;top:223.4px;width:9.4px;height:13.4px;background:#fff;border:1px solid #d0d0d0;box-sizing:border-box"></div>
<svg style="position:absolute;left:660px;top:223px" width="10" height="14" viewBox="0 0 10 14"><path d="M1.6 6.2 L3 11 L8.8 3.2" fill="none" stroke="#151515" stroke-width="1.7" stroke-linejoin="round"/></svg>
<div style="position:absolute;left:496.2px;top:247.38px;font-size:10.30px;line-height:10.30px;white-space:nowrap;color:#2a2a2a;transform:scaleX(1.1705);transform-origin:left 0;">erfasster Saldo</div>
<div style="position:absolute;left:591px;top:247.38px;font-size:10.30px;line-height:10.30px;white-space:nowrap;color:#2a2a2a;transform:scaleX(1.1705);transform-origin:left 0;">Kontow&auml;hrung</div>
<div style="position:absolute;left:685.5px;top:247.38px;font-size:10.30px;line-height:10.30px;white-space:nowrap;color:#2a2a2a;transform:scaleX(1.1705);transform-origin:left 0;">Kontobezeichnun</div>
<div style="position:absolute;left:291px;top:263.58px;font-size:10.30px;line-height:10.30px;white-space:nowrap;color:#2a2a2a;transform:scaleX(1.1705);transform-origin:left 0;">Konto Soll</div>
<div style="position:absolute;left:291px;top:283.08px;font-size:10.30px;line-height:10.30px;white-space:nowrap;color:#2a2a2a;transform:scaleX(1.1705);transform-origin:left 0;">Konto Haben</div>
<div style="position:absolute;left:385px;top:260.7px;width:92.60000000000002px;height:16.30000000000001px;background:#fff;border:1px solid #d8d8d8;box-sizing:border-box"></div>
<div style="position:absolute;left:386.1px;top:263.58px;font-size:10.30px;line-height:10.30px;white-space:nowrap;color:#222;transform:scaleX(1.1705);transform-origin:left 0;">4920</div>
<div style="position:absolute;left:477.6px;top:260.7px;width:12.699999999999989px;height:16.30000000000001px;background:#cbcbcb"></div>
<div style="position:absolute;left:480.15000000000003px;top:272px;width:1.6px;height:1.6px;background:#2a2a2a"></div>
<div style="position:absolute;left:483.15000000000003px;top:272px;width:1.6px;height:1.6px;background:#2a2a2a"></div>
<div style="position:absolute;left:486.15000000000003px;top:272px;width:1.6px;height:1.6px;background:#2a2a2a"></div>
<div style="position:absolute;left:385px;top:280.2px;width:92.60000000000002px;height:16.400000000000034px;background:#fff;border:1px solid #d8d8d8;box-sizing:border-box"></div>
<div style="position:absolute;left:477.6px;top:280.2px;width:12.699999999999989px;height:16.400000000000034px;background:#cbcbcb"></div>
<div style="position:absolute;left:480.15000000000003px;top:291.6px;width:1.6px;height:1.6px;background:#2a2a2a"></div>
<div style="position:absolute;left:483.15000000000003px;top:291.6px;width:1.6px;height:1.6px;background:#2a2a2a"></div>
<div style="position:absolute;left:486.15000000000003px;top:291.6px;width:1.6px;height:1.6px;background:#2a2a2a"></div>
<div style="position:absolute;left:496.3px;top:260.7px;width:78.09999999999997px;height:16.100000000000023px;background:#dcdcdc"></div>
<div style="position:absolute;left:497.40000000000003px;top:263.58px;font-size:10.30px;line-height:10.30px;white-space:nowrap;color:#222;transform:scaleX(1.1705);transform-origin:left 0;">9.065,76</div>
<div style="position:absolute;left:496.3px;top:280.6px;width:78.09999999999997px;height:16.099999999999966px;background:#dcdcdc"></div>
<div style="position:absolute;left:497.40000000000003px;top:283.08px;font-size:10.30px;line-height:10.30px;white-space:nowrap;color:#222;transform:scaleX(1.1705);transform-origin:left 0;">0,00</div>
<div style="position:absolute;left:591px;top:260.7px;width:52.299999999999955px;height:16.100000000000023px;background:#dcdcdc"></div>
<div style="position:absolute;left:592.1px;top:263.58px;font-size:10.30px;line-height:10.30px;white-space:nowrap;color:#222;transform:scaleX(1.1705);transform-origin:left 0;">EUR</div>
<div style="position:absolute;left:591px;top:280.6px;width:52.299999999999955px;height:16.099999999999966px;background:#dcdcdc"></div>
<div style="position:absolute;left:685.3px;top:260.7px;width:190.10000000000002px;height:16.5px;background:#dcdcdc"></div>
<div style="position:absolute;left:686.4px;top:263.58px;font-size:10.30px;line-height:10.30px;white-space:nowrap;color:#222;transform:scaleX(1.1705);transform-origin:left 0;">Telefon</div>
<div style="position:absolute;left:685.3px;top:280px;width:190.10000000000002px;height:16.5px;background:#dcdcdc"></div>
<div style="position:absolute;left:291px;top:342.38px;font-size:10.30px;line-height:10.30px;white-space:nowrap;color:#2a2a2a;transform:scaleX(1.1705);transform-origin:left 0;">Kostenstelle</div>
<div style="position:absolute;left:369.3px;top:339px;width:92.69999999999999px;height:16.399999999999977px;background:#fff;border:1px solid #a86060;box-sizing:border-box"></div>
<div style="position:absolute;left:370.40000000000003px;top:342.38px;font-size:10.30px;line-height:10.30px;white-space:nowrap;color:#222;transform:scaleX(1.1705);transform-origin:left 0;">OH</div>
<div style="position:absolute;left:462px;top:339px;width:12.399999999999977px;height:16.399999999999977px;background:#cbcbcb"></div>
<div style="position:absolute;left:464.4px;top:350.4px;width:1.6px;height:1.6px;background:#2a2a2a"></div>
<div style="position:absolute;left:467.4px;top:350.4px;width:1.6px;height:1.6px;background:#2a2a2a"></div>
<div style="position:absolute;left:470.4px;top:350.4px;width:1.6px;height:1.6px;background:#2a2a2a"></div>
<div style="position:absolute;left:463.7px;top:342.8px;width:0px;height:0px;border-left:4.5px solid transparent;border-right:4.5px solid transparent;border-top:4.5px solid #c81424"></div>
<div style="position:absolute;left:486px;top:342.38px;font-size:10.30px;line-height:10.30px;white-space:nowrap;color:#2a2a2a;transform:scaleX(1.1705);transform-origin:left 0;">Kostentr&auml;ger</div>
<div style="position:absolute;left:564.5px;top:339.5px;width:92.20000000000005px;height:15.699999999999989px;background:#fff;border:1px solid #d8d8d8;box-sizing:border-box"></div>
<div style="position:absolute;left:656.7px;top:339.5px;width:12.799999999999955px;height:15.699999999999989px;background:#cbcbcb"></div>
<div style="position:absolute;left:659.3000000000001px;top:350.2px;width:1.6px;height:1.6px;background:#2a2a2a"></div>
<div style="position:absolute;left:662.3000000000001px;top:350.2px;width:1.6px;height:1.6px;background:#2a2a2a"></div>
<div style="position:absolute;left:665.3000000000001px;top:350.2px;width:1.6px;height:1.6px;background:#2a2a2a"></div>
<div style="position:absolute;left:290px;top:397.8px;width:174px;height:16.2px;background:#dcdcdc"></div>
<div style="position:absolute;left:293px;top:400.78px;font-size:10.30px;line-height:10.30px;white-space:nowrap;color:#222;transform:scaleX(1.1705);transform-origin:left 0;">Vorsteuer Inland</div>
<div style="position:absolute;left:454.5px;top:404px;width:0px;height:0px;border-left:5px solid transparent;border-right:5px solid transparent;border-top:5px solid #111"></div>
<div style="position:absolute;left:486px;top:398.08px;width:78.5px;height:16.30px;overflow:hidden"><div style="position:absolute;left:0;top:3px;font-size:10.30px;line-height:10.30px;white-space:nowrap;color:#2a2a2a;transform:scaleX(1.1705);transform-origin:0 0">Steuerschl&uuml;sse</div></div>
<div style="position:absolute;left:564.5px;top:398.7px;width:92.20000000000005px;height:15.100000000000023px;background:#fff;border:1px solid #d8d8d8;box-sizing:border-box"></div>
<div style="position:absolute;left:566px;top:401.08px;font-size:10.30px;line-height:10.30px;white-space:nowrap;color:#222;transform:scaleX(1.1705);transform-origin:left 0;">voller Satz</div>
<div style="position:absolute;left:656.7px;top:398.7px;width:12.799999999999955px;height:15.100000000000023px;background:#cbcbcb"></div>
<div style="position:absolute;left:659.3000000000001px;top:408.8px;width:1.6px;height:1.6px;background:#2a2a2a"></div>
<div style="position:absolute;left:662.3000000000001px;top:408.8px;width:1.6px;height:1.6px;background:#2a2a2a"></div>
<div style="position:absolute;left:665.3000000000001px;top:408.8px;width:1.6px;height:1.6px;background:#2a2a2a"></div>
<div style="position:absolute;left:658.6px;top:402.5px;width:0px;height:0px;border-left:4.5px solid transparent;border-right:4.5px solid transparent;border-top:4.5px solid #c81424"></div>
<div style="position:absolute;left:291px;top:417.78px;width:52.3px;height:16.30px;overflow:hidden"><div style="position:absolute;left:0;top:3px;font-size:10.30px;line-height:10.30px;white-space:nowrap;color:#2a2a2a;transform:scaleX(1.1705);transform-origin:0 0">MWSt.-He</div></div>
<div style="position:absolute;left:343.3px;top:417px;width:28.899999999999977px;height:16.30000000000001px;background:#fff;border:1px solid #d8d8d8;box-sizing:border-box"></div>
<div style="position:absolute;left:372.2px;top:417px;width:12.199999999999989px;height:16.30000000000001px;background:#cbcbcb"></div>
<div style="position:absolute;left:374.49999999999994px;top:428.3px;width:1.6px;height:1.6px;background:#2a2a2a"></div>
<div style="position:absolute;left:377.49999999999994px;top:428.3px;width:1.6px;height:1.6px;background:#2a2a2a"></div>
<div style="position:absolute;left:380.49999999999994px;top:428.3px;width:1.6px;height:1.6px;background:#2a2a2a"></div>
<div style="position:absolute;left:385px;top:420.78px;font-size:10.30px;line-height:10.30px;white-space:nowrap;color:#2a2a2a;transform:scaleX(1.1705);transform-origin:left 0;">LKZ</div>
<div style="position:absolute;left:417px;top:417px;width:29px;height:16.30000000000001px;background:#fff;border:1px solid #a86060;box-sizing:border-box"></div>
<div style="position:absolute;left:418.1px;top:420.78px;font-size:10.30px;line-height:10.30px;white-space:nowrap;color:#222;transform:scaleX(1.1705);transform-origin:left 0;">D</div>
<div style="position:absolute;left:446px;top:417px;width:13px;height:16.30000000000001px;background:#cbcbcb"></div>
<div style="position:absolute;left:448.7px;top:428.3px;width:1.6px;height:1.6px;background:#2a2a2a"></div>
<div style="position:absolute;left:451.7px;top:428.3px;width:1.6px;height:1.6px;background:#2a2a2a"></div>
<div style="position:absolute;left:454.7px;top:428.3px;width:1.6px;height:1.6px;background:#2a2a2a"></div>
<div style="position:absolute;left:486px;top:417.88px;width:94px;height:16.30px;overflow:hidden"><div style="position:absolute;left:0;top:3px;font-size:10.30px;line-height:10.30px;white-space:nowrap;color:#2a2a2a;transform:scaleX(1.1705);transform-origin:0 0">man. Steuerbetra</div></div>
<div style="position:absolute;left:580px;top:417.3px;width:79px;height:16.399999999999977px;background:#fff;border:1px solid #d8d8d8;box-sizing:border-box"></div>
<div style="position:absolute;left:581px;top:420.88px;font-size:10.30px;line-height:10.30px;white-space:nowrap;color:#222;transform:scaleX(1.1705);transform-origin:left 0;">0,00</div>
<div style="position:absolute;left:291px;top:440.78px;font-size:10.30px;line-height:10.30px;white-space:nowrap;color:#2a2a2a;transform:scaleX(1.1705);transform-origin:left 0;">DATEV Konto-Nr.</div>
<div style="position:absolute;left:385.5px;top:436.7px;width:105.5px;height:16.600000000000023px;background:#dcdcdc"></div>
<div style="position:absolute;left:675px;top:339px;width:210px;height:213px;background:#fff;border:1px solid #9a9a9a;box-sizing:border-box"></div>
<div style="position:absolute;left:675.5px;top:356px;width:16.5px;height:196px;background:#e9e9e9"></div>
<div style="position:absolute;left:675.5px;top:339.5px;width:16.5px;height:16.5px;background:linear-gradient(#f2f4ff,#dde2f8)"></div>
<div style="position:absolute;left:678.8px;top:351px;width:1.4px;height:1.4px;background:#3a4aa0"></div>
<div style="position:absolute;left:682.8px;top:351px;width:1.4px;height:1.4px;background:#3a4aa0"></div>
<div style="position:absolute;left:686.8px;top:351px;width:1.4px;height:1.4px;background:#3a4aa0"></div>
<div style="position:absolute;left:692px;top:339.5px;width:181px;height:16.5px;background:linear-gradient(#d8d8d8,#c6c6c6)"></div>
<div style="position:absolute;left:728.5px;top:339.5px;width:1px;height:16.5px;background:#eeeeee"></div>
<div style="position:absolute;left:778.5px;top:339.5px;width:1px;height:16.5px;background:#eeeeee"></div>
<div style="position:absolute;left:832px;top:339.5px;width:1px;height:16.5px;background:#eeeeee"></div>
<div style="position:absolute;left:675.5px;top:355px;width:197.5px;height:1.4px;background:#555"></div>

<div style="position:absolute;left:696px;top:341px;width:24px;height:13px;overflow:hidden"><div style="position:absolute;left:0;top:0.4px;font-size:11.7px;line-height:11.7px;color:#222;white-space:nowrap">Beleg</div></div>
<div style="position:absolute;left:716px;top:345px;width:0px;height:0px;border-left:5px solid transparent;border-right:5px solid transparent;border-top:6px solid #d8d8d8"></div>
<div style="position:absolute;left:731.3px;top:341px;width:46px;height:13px;overflow:hidden"><div style="position:absolute;left:0;top:0.4px;font-size:11.7px;line-height:11.7px;color:#222;white-space:nowrap">Konto Soll</div></div>
<div style="position:absolute;left:782.7px;top:341px;width:49px;height:13px;overflow:hidden"><div style="position:absolute;left:0;top:0.4px;font-size:11.7px;line-height:11.7px;color:#222;white-space:nowrap">Konto Haben</div></div>
<div style="position:absolute;left:855.7px;top:341px;width:17px;height:13px;overflow:hidden"><div style="position:absolute;left:0;top:0.4px;font-size:11.7px;line-height:11.7px;color:#c03030;white-space:nowrap">Betrag</div></div>
<div style="position:absolute;left:692px;top:356.4px;width:181px;height:14.2px;background:#fff"></div>
<div style="position:absolute;left:675.5px;top:356.4px;width:16.5px;height:14.2px;background:#c8c8c8"></div>
<svg style="position:absolute;left:678px;top:358px" width="11" height="11" viewBox="0 0 11 11"><path d="M5.5 0.5 L6.9 2.2 L9 1.9 L8.9 4 L10.5 5.5 L8.9 7 L9 9.1 L6.9 8.8 L5.5 10.5 L4.1 8.8 L2 9.1 L2.1 7 L0.5 5.5 L2.1 4 L2 1.9 L4.1 2.2 Z" fill="#1010e0"/></svg>
<div style="position:absolute;left:675.5px;top:370.4px;width:197.5px;height:1.6px;background:#6a6a6a"></div>
<div style="position:absolute;left:692px;top:372px;width:181px;height:16.8px;background:#ececec"></div>
<div style="position:absolute;left:675.5px;top:372px;width:16.5px;height:16.8px;background:#c4c4c4"></div>
<div style="position:absolute;left:675.5px;top:388.6px;width:197.5px;height:1px;background:#dcdcdc"></div>
<div style="position:absolute;left:728.5px;top:356.4px;width:1px;height:32.4px;background:#d8d8d8"></div>
<div style="position:absolute;left:778.5px;top:356.4px;width:1px;height:32.4px;background:#d8d8d8"></div>
<div style="position:absolute;left:832px;top:356.4px;width:1px;height:32.4px;background:#d8d8d8"></div>
<div style="position:absolute;left:731.7px;top:360.08px;font-size:10.30px;line-height:10.30px;white-space:nowrap;color:#333;transform:scaleX(1.1705);transform-origin:left 0;">4806</div>
<div style="position:absolute;left:835.7px;top:360.08px;font-size:10.30px;line-height:10.30px;white-space:nowrap;color:#333;transform:scaleX(1.1705);transform-origin:left 0;">9,90</div>
<div style="position:absolute;left:731.7px;top:376.08px;font-size:10.30px;line-height:10.30px;white-space:nowrap;color:#333;transform:scaleX(1.1705);transform-origin:left 0;">4920</div>
<div style="position:absolute;left:835.7px;top:376.08px;font-size:10.30px;line-height:10.30px;white-space:nowrap;color:#333;transform:scaleX(1.1705);transform-origin:left 0;">29,90</div>
<div style="position:absolute;left:873px;top:339.5px;width:12px;height:184px;background:#eceef0;border-left:1px solid #b8b8b8;box-sizing:border-box"></div>
<div style="position:absolute;left:873px;top:339.5px;width:12px;height:11.5px;background:linear-gradient(#fafafa,#e6e6e6);border:1px solid #a8a8a8;box-sizing:border-box"></div>
<div style="position:absolute;left:875.5px;top:343px;width:0px;height:0px;border-left:3.5px solid transparent;border-right:3.5px solid transparent;border-bottom:4px solid #222"></div>
<div style="position:absolute;left:873px;top:511px;width:12px;height:12px;background:linear-gradient(#fafafa,#e6e6e6);border:1px solid #a8a8a8;box-sizing:border-box"></div>
<div style="position:absolute;left:875.5px;top:515px;width:0px;height:0px;border-left:3.5px solid transparent;border-right:3.5px solid transparent;border-top:4px solid #222"></div>
<div style="position:absolute;left:675.5px;top:523px;width:197.5px;height:1.2px;background:#8a8a8a"></div>
<div style="position:absolute;left:692px;top:524px;width:181px;height:16px;background:#fff"></div>
<div style="position:absolute;left:728.5px;top:524px;width:1.2px;height:16px;background:#6a6a6a"></div>
<div style="position:absolute;left:778.5px;top:524px;width:1.2px;height:16px;background:#6a6a6a"></div>
<div style="position:absolute;left:831px;top:524px;width:1.2px;height:16px;background:#6a6a6a"></div>
<div style="position:absolute;left:839.5px;top:524px;width:1.2px;height:16px;background:#6a6a6a"></div>
<div style="position:absolute;left:692px;top:539.6px;width:181px;height:1px;background:#8a8a8a"></div>
<div style="position:absolute;left:692px;top:540.3px;width:181px;height:11.5px;background:linear-gradient(#f2f4f8,#e2e4e8)"></div>
<div style="position:absolute;left:692px;top:540.3px;width:11.5px;height:11.5px;background:linear-gradient(#fafafa,#e6e6e6);border-right:1px solid #b8b8b8;box-sizing:border-box"></div>
<div style="position:absolute;left:695.5px;top:542.5px;width:0px;height:0px;border-top:3.5px solid transparent;border-bottom:3.5px solid transparent;border-right:4px solid #222"></div>
<div style="position:absolute;left:703.3px;top:540.3px;width:11.8px;height:11.5px;background:linear-gradient(90deg,#c8d8ec,#e0ecf8,#c8d8ec);border:1px solid #90a4c0;box-sizing:border-box"></div>
<div style="position:absolute;left:707.5px;top:543px;width:1px;height:6px;background:#7890b0"></div>
<div style="position:absolute;left:710px;top:543px;width:1px;height:6px;background:#7890b0"></div>
<div style="position:absolute;left:861.3px;top:540.3px;width:11.7px;height:11.5px;background:linear-gradient(#fafafa,#e6e6e6);border-left:1px solid #b8b8b8;box-sizing:border-box"></div>
<div style="position:absolute;left:865.5px;top:542.5px;width:0px;height:0px;border-top:3.5px solid transparent;border-bottom:3.5px solid transparent;border-left:4px solid #222"></div>
<div style="position:absolute;left:873px;top:523px;width:12px;height:29px;background:#e9e9e9;border-left:1px solid #b8b8b8;box-sizing:border-box"></div>
<div style="position:absolute;left:675px;top:339px;width:210px;height:213px;border:1px solid #9a9a9a;box-sizing:border-box"></div>
<div style="position:absolute;left:691.6px;top:523px;width:1.2px;height:29px;background:#7a7a7a"></div>
</body></html>
